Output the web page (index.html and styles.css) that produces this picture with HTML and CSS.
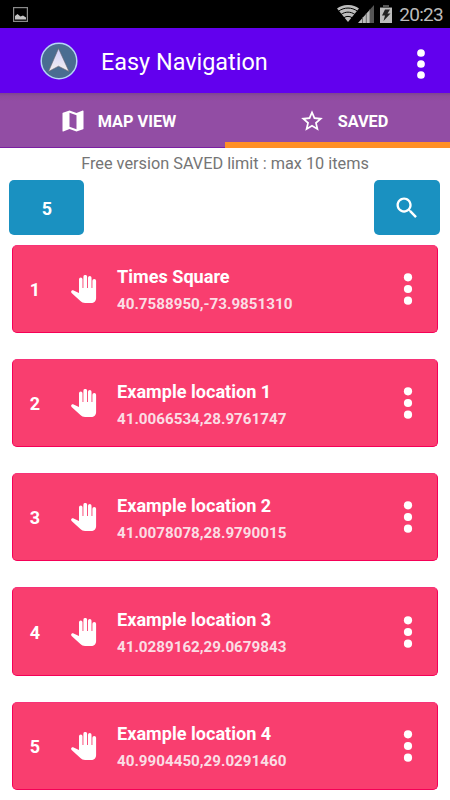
FILE: index.html
```html
<!DOCTYPE html>
<html lang="en">
<head>
    <meta charset="UTF-8">
    <meta name="viewport" content="width=device-width, initial-scale=1.0">
    <title>Easy Navigation</title>
    <link rel="stylesheet" href="styles.css">
</head>
<body>
    <svg class="defs" width="0" height="0">
        <symbol id="hand" viewBox="0 0 26 28">
            <path d="M8 4.200a1.750 1.750 0 0 1 3.500 0V13h.9V1.800a1.850 1.850 0 0 1 3.700 0V13h.9V2.800a1.750 1.750 0 0 1 3.500 0V13h.9V5.800a1.850 1.850 0 0 1 3.700 0V23c0 3-2 5-5 5h-6c-2 0-3.500-.7-4.700-2L.6 18c-1.300-1.600.2-3.300 2-2.600L8 18z"/>
        </symbol>
        <symbol id="dots" viewBox="0 0 10 34">
            <circle cx="5" cy="5.3" r="4.1"/>
            <circle cx="5" cy="17" r="4.1"/>
            <circle cx="5" cy="28.7" r="4.1"/>
        </symbol>
    </svg>

    <div class="status-bar">
        <svg class="picture-icon" width="15" height="15" viewBox="0 0 15 15">
            <rect x=".6" y=".6" width="13.8" height="13.8" fill="none" stroke="#8a8a8a" stroke-width="1.2"/>
            <path d="M2 12.500V9l2.500-2 3 2.500L10 8.500l3 2v2z" fill="#c4c4c4"/>
        </svg>
        <svg class="wifi-icon" width="22" height="17" viewBox="0 0 22 17">
            <path d="M11 17L0 3.500C6.500-1.200 15.500-1.200 22 3.500z" fill="#bcbcbc"/>
            <path d="M1.500 6.200c5.700-4.200 13.300-4.200 19 0M4.200 9.400c4.100-3 9.500-3 13.600 0M7 12.600c2.500-1.600 5.500-1.600 8 0" fill="none" stroke="#000" stroke-width="1"/>
        </svg>
        <svg class="signal-icon" width="16" height="18" viewBox="0 0 16 18">
            <path d="M0 18L12 4.500V18z" fill="#bcbcbc"/>
            <path d="M12 4.500L16 0v18h-4z" fill="#555"/>
            <path d="M4.500 12v6M8.300 8v10M12 4v14" stroke="#555" stroke-width=".8"/>
        </svg>
        <svg class="battery-icon" width="12" height="18" viewBox="0 0 12 18">
            <path d="M3 0h6v2h3v2H0V2h3z" fill="#555"/>
            <path d="M0 3h12v15H0z" fill="#bcbcbc"/>
            <path d="M5 4.500h5L7.500 8.500h3L3.500 16l1.500-5.500H2z" fill="#222"/>
        </svg>
        <span class="clock">20:23</span>
    </div>

    <header class="app-bar">
        <svg class="logo" width="38" height="38" viewBox="0 0 38 38">
            <defs>
                <linearGradient id="arrow" x1="0" y1="0" x2="0" y2="1">
                    <stop offset="0" stop-color="#cfd0ff"/>
                    <stop offset="1" stop-color="#f4efee"/>
                </linearGradient>
            </defs>
            <circle cx="19" cy="19" r="17.800" fill="#4a6d91" stroke="#b5d6f5" stroke-width="1.500"/>
            <path d="M18.500 6.500L29 29.500l-10.500-5.300L8.500 29.500z" fill="url(#arrow)" stroke="#6c6671" stroke-width=".6"/>
        </svg>
        <h1>Easy Navigation</h1>
        <svg class="menu-icon" width="10" height="32"><use href="#dots"/></svg>
    </header>

    <nav class="tabs">
        <a class="tab">
            <svg class="map-icon" width="28" height="28" viewBox="0 0 24 24">
                <path d="M20.500 3l-.16.03L15 5.100 9 3 3.360 4.900c-.21.07-.36.25-.36.48V20.500c0 .28.22.5.5.5l.16-.03L9 18.900l6 2.100 5.640-1.900c.21-.07.36-.25.36-.48V3.500c0-.28-.22-.5-.5-.5zM15 19l-6-2.110V5l6 2.110V19z"/>
            </svg>
            <span>MAP VIEW</span>
        </a>
        <a class="tab active">
            <svg class="star-icon" width="26" height="26" viewBox="0 0 24 24">
                <path d="M22 9.240l-7.190-.62L12 2 9.190 8.630 2 9.240l5.460 4.730L5.820 21 12 17.270 18.180 21l-1.630-7.030L22 9.240zM12 15.400l-3.760 2.270 1-4.280-3.320-2.880 4.380-.38L12 6.100l1.710 4.040 4.380.38-3.320 2.880 1 4.280L12 15.400z"/>
            </svg>
            <span>SAVED</span>
        </a>
    </nav>

    <p class="limit">Free version SAVED limit : max 10 items</p>

    <div class="toolbar">
        <button class="count">5</button>
        <button class="search">
            <svg width="28" height="28" viewBox="0 0 24 24">
                <path d="M15.500 14h-.79l-.28-.27C15.410 12.590 16 11.110 16 9.500 16 5.910 13.090 3 9.500 3S3 5.910 3 9.500 5.910 16 9.500 16c1.610 0 3.090-.59 4.230-1.570l.27.28v.79l5 4.990L20.490 19l-4.990-5zm-6 0C7.010 14 5 11.990 5 9.500S7.010 5 9.500 5 14 7.010 14 9.500 11.990 14 9.500 14z"/>
            </svg>
        </button>
    </div>

    <main class="list">
        <div class="item">
            <span class="number">1</span>
            <svg class="hand" width="26" height="28"><use href="#hand"/></svg>
            <div class="info">
                <h2>Times Square</h2>
                <p>40.7588950,-73.9851310</p>
            </div>
            <svg class="more" width="10" height="34"><use href="#dots"/></svg>
        </div>
        <div class="item">
            <span class="number">2</span>
            <svg class="hand" width="26" height="28"><use href="#hand"/></svg>
            <div class="info">
                <h2>Example location 1</h2>
                <p>41.0066534,28.9761747</p>
            </div>
            <svg class="more" width="10" height="34"><use href="#dots"/></svg>
        </div>
        <div class="item">
            <span class="number">3</span>
            <svg class="hand" width="26" height="28"><use href="#hand"/></svg>
            <div class="info">
                <h2>Example location 2</h2>
                <p>41.0078078,28.9790015</p>
            </div>
            <svg class="more" width="10" height="34"><use href="#dots"/></svg>
        </div>
        <div class="item">
            <span class="number">4</span>
            <svg class="hand" width="26" height="28"><use href="#hand"/></svg>
            <div class="info">
                <h2>Example location 3</h2>
                <p>41.0289162,29.0679843</p>
            </div>
            <svg class="more" width="10" height="34"><use href="#dots"/></svg>
        </div>
        <div class="item">
            <span class="number">5</span>
            <svg class="hand" width="26" height="28"><use href="#hand"/></svg>
            <div class="info">
                <h2>Example location 4</h2>
                <p>40.9904450,29.0291460</p>
            </div>
            <svg class="more" width="10" height="34"><use href="#dots"/></svg>
        </div>
    </main>
</body>
</html>
```
FILE: styles.css
```css
* {
    box-sizing: border-box;
}

body {
    font-family: Roboto, sans-serif;
    margin: 0;
    background-color: #fff;
    height: 800px;
    overflow: hidden;
}

h1, h2, p {
    margin: 0;
}

svg {
    display: block;
    flex-shrink: 0;
    fill: #fff;
}

.defs {
    position: absolute;
}

.status-bar {
    display: flex;
    align-items: center;
    height: 28px;
    padding: 0 7px 0 13px;
    background-color: #000;
}

.wifi-icon {
    margin-left: auto;
    margin-bottom: 1px;
}

.signal-icon {
    margin-left: -1px;
}

.battery-icon {
    margin-left: 6px;
}

.clock {
    margin-left: 7px;
    padding-top: 2px;
    font-size: 19px;
    line-height: 26px;
    letter-spacing: -0.7px;
    color: #bcbcbc;
}

.app-bar {
    display: flex;
    align-items: center;
    height: 65px;
    padding: 1px 24px 0 40px;
    background-color: #6200ee;
}

.app-bar h1 {
    margin: 1px 0 0 23px;
    font-size: 23.4px;
    font-weight: 400;
    line-height: 30px;
    color: #fff;
}

.menu-icon {
    margin: 6px 0 0 auto;
}

.tabs {
    display: flex;
    height: 55px;
    background: linear-gradient(#7d4391, #8d4b9c 3px, #924da4 8px);
    border-bottom: 1px solid #7b1fa2;
}

.tab {
    display: flex;
    align-items: center;
    justify-content: center;
    width: 225px;
    height: 55px;
    gap: 11px;
    padding-left: 10px;
    font-size: 16.3px;
    font-weight: 700;
    color: #fff;
}

.tab span {
    padding-top: 2px;
}

.tab.active {
    padding: 6px 0 0 12px;
    gap: 13px;
    border-bottom: 6px solid #ff8f26;
}

.limit {
    height: 32px;
    padding-top: 5px;
    font-size: 16.3px;
    line-height: 22px;
    text-align: center;
    color: #757575;
}

.toolbar {
    display: flex;
    justify-content: space-between;
    padding: 0 9.8px 0 9.4px;
}

.toolbar button {
    display: flex;
    align-items: center;
    justify-content: center;
    height: 55px;
    padding: 0;
    border: none;
    border-radius: 5px;
    background-color: #1a91c1;
    font-family: inherit;
    font-size: 18px;
    font-weight: 700;
    color: #fff;
}

.toolbar .count {
    width: 75px;
    padding-top: 1px;
}

.toolbar .search {
    width: 66px;
}

.list {
    display: flex;
    flex-direction: column;
    gap: 26px;
    padding: 9.6px 12px 0;
}

.item {
    display: flex;
    align-items: center;
    height: 88.3px;
    padding: 0 24.5px 0 12px;
    border: 1px solid #f50057;
    border-top-color: #f73378;
    border-radius: 5px;
    background-color: #f93e6f;
    color: #fff;
}

.number {
    width: 20px;
    padding-top: 1px;
    text-align: center;
    font-size: 18px;
    font-weight: 700;
}

.hand {
    margin-left: 26px;
}

.info {
    margin-left: 20px;
    padding-top: 3px;
}

.info h2 {
    font-size: 18.1px;
    font-weight: 700;
    line-height: 24px;
}

.info p {
    margin-top: 4px;
    font-size: 15.2px;
    font-weight: 700;
    line-height: 22px;
    color: #fbdde4;
}

.more {
    margin-left: auto;
}
```
